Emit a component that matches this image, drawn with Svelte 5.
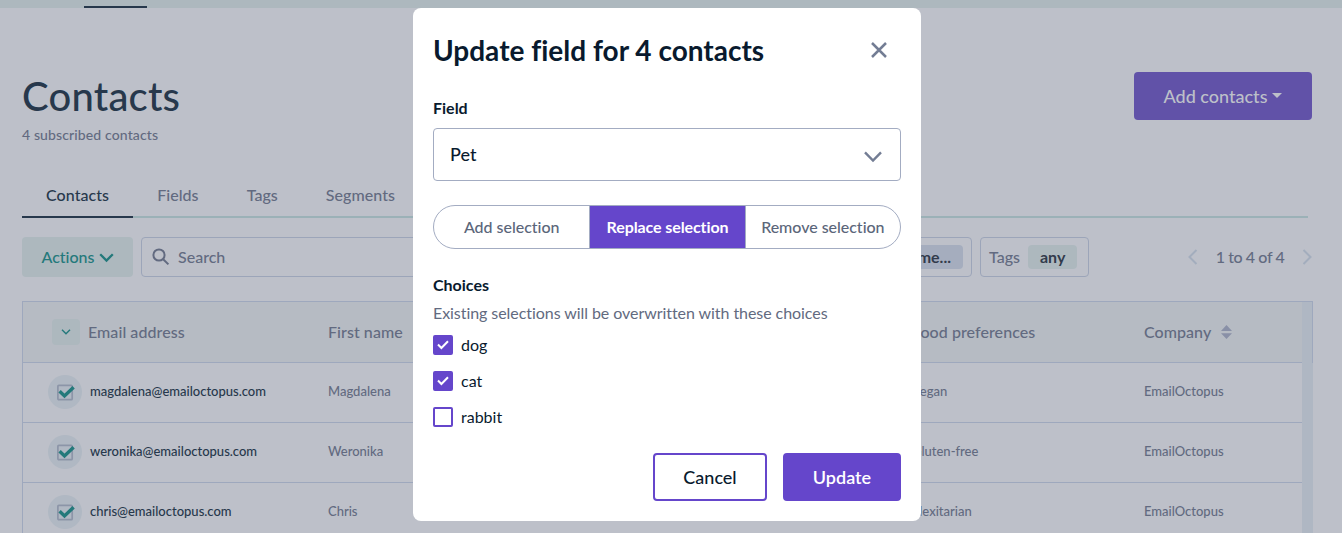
<script lang="ts">
  let tabs = ['Contacts', 'Fields', 'Tags', 'Segments'];
  let activeTab = $state('Contacts');

  let contacts = $state([
    { email: 'magdalena@emailoctopus.com', name: 'Magdalena', food: 'Vegan', company: 'EmailOctopus' },
    { email: 'weronika@emailoctopus.com', name: 'Weronika', food: 'Gluten-free', company: 'EmailOctopus' },
    { email: 'chris@emailoctopus.com', name: 'Chris', food: 'Flexitarian', company: 'EmailOctopus' }
  ]);

  let modes = ['Add selection', 'Replace selection', 'Remove selection'];
  let mode = $state('Replace selection');

  let choices = $state([
    { label: 'dog', checked: true },
    { label: 'cat', checked: true },
    { label: 'rabbit', checked: false }
  ]);
</script>

<div class="page">
  <div class="topbar"><span class="topbar-active"></span></div>

  <main>
    <header>
      <div>
        <h1>Contacts</h1>
        <p class="subtitle">4 subscribed contacts</p>
      </div>
      <button class="add-btn">Add contacts<span class="caret"></span></button>
    </header>

    <nav>
      {#each tabs as tab}
        <button class="tab" class:active={tab === activeTab} onclick={() => (activeTab = tab)}>{tab}</button>
      {/each}
    </nav>

    <div class="toolbar">
      <button class="actions-btn">
        Actions
        <svg width="15" height="10" viewBox="0 0 15 10"><path d="M1.2 1.2 7.5 7.6 13.8 1.2" /></svg>
      </button>
      <div class="search">
        <svg width="18" height="18" viewBox="0 0 18 18"><circle cx="7" cy="7" r="5.6" /><path d="M11.2 11.2 16.4 16.4" /></svg>
        <span>Search</span>
      </div>
      <div class="filter status"><b>Subscribed, me...</b></div>
      <div class="filter tags">Tags <b>any</b></div>
      <div class="pager">
        <svg width="10" height="16" viewBox="0 0 10 16"><path d="M8.5 1 1.5 8 8.5 15" /></svg>
        <span>1 to 4 of 4</span>
        <svg width="10" height="16" viewBox="0 0 10 16"><path d="M1.5 1 8.5 8 1.5 15" /></svg>
      </div>
    </div>

    <div class="table">
      <div class="rows">
        <div class="row head">
          <div class="cell first">
            <span class="select-all"><svg width="10" height="6" viewBox="0 0 10 6"><path d="M1 .8 5 4.8 9 .8" /></svg></span>
            Email address
          </div>
          <div class="cell">First name</div>
          <div class="cell">Food preferences</div>
          <div class="cell">
            Company
            <svg class="sort" width="11" height="14" viewBox="0 0 11 14"><path d="M5.5 0 11 6H0ZM0 8.2H11L5.5 14Z" /></svg>
          </div>
        </div>
        {#each contacts as contact}
          <div class="row">
            <div class="cell first">
              <span class="tick">
                <svg width="18" height="18" viewBox="0 0 18 18">
                  <rect x=".9" y="2.4" width="14.3" height="14.3" rx="1" />
                  <path d="M2.6 8.2 7.5 12.9 16.6 4.2" />
                </svg>
              </span>
              <span class="email">{contact.email}</span>
            </div>
            <div class="cell">{contact.name}</div>
            <div class="cell">{contact.food}</div>
            <div class="cell">{contact.company}</div>
          </div>
        {/each}
      </div>
      <div class="scrollbar"><span></span></div>
    </div>
  </main>

  <div class="overlay">
    <div class="modal">
      <div class="modal-header">
        <h2>Update field for 4 contacts</h2>
        <button class="close" aria-label="Close">
          <svg width="16" height="16" viewBox="0 0 16 16"><path d="M1 1 15 15M15 1 1 15" /></svg>
        </button>
      </div>

      <h3>Field</h3>
      <div class="select">
        <span>Pet</span>
        <svg width="18" height="12" viewBox="0 0 18 12"><path d="M1 1.4 9 9.6 17 1.4" /></svg>
      </div>

      <div class="modes">
        {#each modes as item}
          <button class:selected={item === mode} onclick={() => (mode = item)}>{item}</button>
        {/each}
      </div>

      <h3>Choices</h3>
      <p class="hint">Existing selections will be overwritten with these choices</p>
      <div class="choices">
        {#each choices as choice}
          <button class="choice" onclick={() => (choice.checked = !choice.checked)}>
            <span class="box" class:checked={choice.checked}>
              {#if choice.checked}
                <svg width="12" height="10" viewBox="0 0 12 10"><path d="M1 4.5 4.4 8 11 1.3" /></svg>
              {/if}
            </span>
            <span class="choice-label">{choice.label}</span>
          </button>
        {/each}
      </div>

      <div class="modal-footer">
        <button class="cancel">Cancel</button>
        <button class="update">Update</button>
      </div>
    </div>
  </div>
</div>

<style>
  :global(body) {
    background: #bdc0c9;
    overflow: hidden;
  }

  .page {
    position: relative;
    height: 533px;
    overflow: hidden;
    font-family: Lato, 'Open Sans', sans-serif;
    font-size: 16px;
    font-weight: 500;
    font-variant-ligatures: none;
    color: #626a80;
  }

  .page * {
    box-sizing: border-box;
  }

  button {
    font: inherit;
    font-variant-ligatures: none;
    color: inherit;
    border: none;
    background: none;
    padding: 0;
    cursor: pointer;
  }

  h1, h2, h3, p {
    margin: 0;
  }

  svg {
    display: block;
    flex: none;
    fill: none;
    stroke: currentColor;
    stroke-width: 2;
  }

  .topbar {
    display: flex;
    align-items: flex-end;
    height: 8px;
    padding-left: 84px;
    background: #adb8be;
  }

  .topbar-active {
    width: 63px;
    height: 2px;
    background: #27384c;
  }

  main {
    padding: 64px 29px 0 22px;
  }

  header {
    display: flex;
    justify-content: space-between;
    height: 102px;
    padding-right: 1px;
  }

  h1 {
    font-size: 40px;
    font-weight: 500;
    line-height: 48px;
    letter-spacing: 0.2px;
    color: #27384c;
  }

  .subtitle {
    margin-top: 5px;
    font-size: 14px;
    line-height: 20px;
    letter-spacing: 0.12px;
  }

  .add-btn {
    display: flex;
    align-items: center;
    justify-content: center;
    width: 178px;
    height: 48px;
    border-radius: 4px;
    background: #6152a8;
    font-size: 18px;
    color: #bdc0c9;
  }

  .caret {
    margin: -1px 0 0 5px;
    border: 5px solid transparent;
    border-top-color: #bdc0c9;
    border-bottom: none;
  }

  nav {
    display: flex;
    height: 44px;
    margin-right: 5px;
    border-bottom: 2px solid #9bb1b7;
  }

  .tab {
    height: 44px;
    padding: 0 24px 2px;
    border-bottom: 2px solid transparent;
    letter-spacing: 0.06px;
  }

  .tab.active {
    border-color: #27384c;
    color: #27384c;
  }

  .toolbar {
    display: flex;
    height: 40px;
    margin: 19px 0 24px;
  }

  .actions-btn {
    display: flex;
    align-items: center;
    justify-content: center;
    gap: 4px;
    width: 111px;
    margin-right: 8px;
    padding-bottom: 1px;
    border-radius: 4px;
    background: #adb8be;
    color: #24797b;
  }

  .actions-btn svg {
    margin-top: 2px;
    stroke-width: 2.3;
  }

  .search, .filter {
    display: flex;
    align-items: center;
    padding-bottom: 1px;
    border: 1px solid #9ca5b9;
    border-radius: 4px;
  }

  .search {
    gap: 8px;
    width: 540px;
    padding-left: 10px;
  }

  .status {
    justify-content: flex-end;
    width: 283px;
    margin-left: 8px;
    padding-right: 8px;
  }

  .tags {
    gap: 8px;
    width: 109px;
    margin-left: 8px;
    padding-left: 8px;
  }

  .filter b {
    padding: 0 12px;
    border-radius: 4px;
    background: #adb8be;
    line-height: 24px;
    color: #323b4c;
  }

  .status b {
    background: #a5adbe;
  }

  .pager {
    display: flex;
    align-items: center;
    justify-content: space-between;
    width: 124px;
    margin: 0 1px 0 auto;
  }

  .pager span {
    padding-bottom: 1px;
    letter-spacing: -0.4px;
  }

  .pager svg {
    color: #a3adbd;
  }

  .table {
    display: flex;
    height: 260px;
    border-top: 1px solid #9ea8bd;
  }

  .rows {
    flex: 1;
    border-left: 1px solid #9ea8bd;
  }

  .row {
    display: grid;
    grid-template-columns: 305px 584px 232px 158px;
    height: 60px;
    border-bottom: 1px solid #9ea8bd;
    font-size: 13px;
  }

  .head {
    height: 61px;
    background: #b6bbc3;
    font-size: 16px;
    letter-spacing: 0.06px;
  }

  .cell {
    display: flex;
    align-items: center;
    padding-bottom: 3px;
  }

  .row.head .cell {
    padding-bottom: 1px;
  }

  .first {
    gap: 8px;
    padding-left: 25px;
  }

  .head .first {
    padding-left: 29px;
  }

  .select-all {
    display: flex;
    align-items: center;
    justify-content: center;
    width: 28px;
    height: 26px;
    border-radius: 4px;
    background: #adb8be;
    color: #24797b;
  }

  .select-all svg {
    stroke-width: 1.4;
  }

  .sort {
    margin-left: 10px;
    fill: #8990a7;
    stroke: none;
  }

  .tick {
    display: flex;
    align-items: center;
    justify-content: center;
    width: 34px;
    height: 34px;
    margin-top: 1px;
    border-radius: 50%;
    background: #b0b8c3;
  }

  .tick svg {
    margin-left: 2px;
  }

  .tick rect {
    stroke: #8c95a8;
    stroke-width: 1.7;
  }

  .tick path {
    stroke: #24797b;
    stroke-width: 3.4;
  }

  .email {
    color: #27384c;
  }

  .scrollbar {
    width: 11px;
    background: #afb7c3;
  }

  .scrollbar span {
    display: block;
    height: 61px;
    border-right: 1px solid #9ea8bd;
  }

  .overlay {
    position: absolute;
    inset: 0;
    display: flex;
    align-items: flex-start;
    padding: 8px 0 0 413px;
  }

  .modal {
    width: 508px;
    height: 513px;
    padding: 20px;
    border-radius: 8px;
    background: #fff;
    color: #091a2e;
  }

  .modal-header {
    display: flex;
    align-items: center;
    justify-content: space-between;
    height: 44px;
    margin-bottom: 24px;
    padding-right: 14px;
  }

  h2 {
    font-size: 28px;
    font-weight: 700;
  }

  .close {
    color: #737d94;
  }

  .close svg {
    stroke-width: 2.5;
  }

  h3 {
    font-size: 16px;
    font-weight: 700;
    line-height: 24px;
  }

  .select {
    display: flex;
    align-items: center;
    justify-content: space-between;
    height: 53px;
    margin: 8px 0 24px;
    padding: 0 18px 1px 16px;
    border: 1px solid #a3acc2;
    border-radius: 4px;
    font-size: 18px;
  }

  .select svg {
    margin-top: 5px;
    color: #737d94;
    stroke-width: 2.4;
  }

  .modes {
    display: grid;
    grid-template-columns: repeat(3, 1fr);
    height: 44px;
    margin-bottom: 24px;
    border: 1px solid #a3acc2;
    border-radius: 22px;
    overflow: hidden;
    color: #5b667a;
  }

  .modes button {
    padding-bottom: 1px;
    letter-spacing: -0.03px;
  }

  .modes button + button {
    border-left: 1px solid #a3acc2;
  }

  .modes .selected {
    background: #6546cb;
    color: #fff;
    font-weight: 700;
    letter-spacing: -0.1px;
  }

  .hint {
    margin-top: 4px;
    line-height: 24px;
    font-weight: 400;
    letter-spacing: -0.06px;
    color: #626a80;
  }

  .choices {
    display: flex;
    flex-direction: column;
    gap: 12px;
    margin: 8px 0 24px;
  }

  .choice {
    display: flex;
    align-items: center;
    gap: 8px;
    height: 24px;
    font-weight: 400;
  }

  .choice-label {
    padding-bottom: 1px;
  }

  .box {
    display: flex;
    align-items: center;
    justify-content: center;
    width: 20px;
    height: 20px;
    border: 2px solid #6546cb;
    border-radius: 2px;
    color: #fff;
  }

  .box.checked {
    background: #6546cb;
  }

  .modal-footer {
    display: flex;
    justify-content: flex-end;
    gap: 16px;
    font-size: 18px;
  }

  .cancel, .update {
    width: 114px;
    height: 48px;
    border: 2px solid #6546cb;
    border-radius: 4px;
  }

  .update {
    width: 118px;
    background: #6546cb;
    color: #fff;
    font-weight: 600;
  }
</style>
